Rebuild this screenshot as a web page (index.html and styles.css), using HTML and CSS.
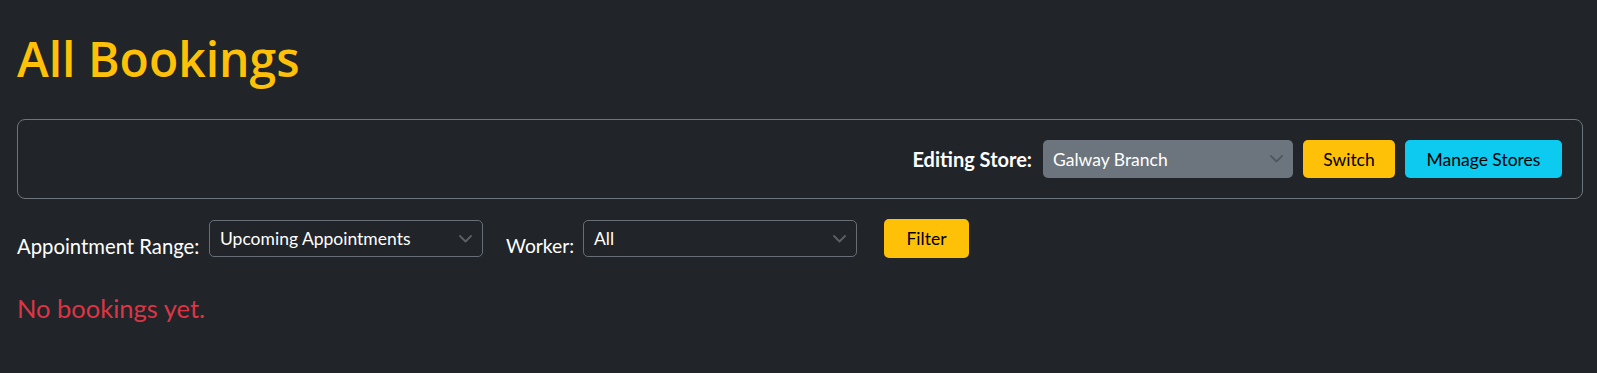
FILE: index.html
```html
<!DOCTYPE html>
<html>
<head>
<meta charset="utf-8">
<link rel="stylesheet" href="styles.css">
</head>
<body>
<div class="page">
  <h1 class="title">All Bookings</h1>
  <div class="store-box">
    <span class="store-label">Editing Store:</span>
    <div class="select select-store">
      <span>Galway Branch</span>
      <svg class="chev" width="13" height="8" viewBox="0 0 13 8"><path d="M1 1l5.5 5.5L12 1" fill="none" stroke="#50575e" stroke-width="1.8" stroke-linecap="round" stroke-linejoin="round"/></svg>
    </div>
    <button class="btn btn-switch">Switch</button>
    <button class="btn btn-manage">Manage Stores</button>
  </div>
  <div class="filters">
    <label class="flabel range">Appointment Range:</label>
    <div class="select select-outline">
      <span>Upcoming Appointments</span>
      <svg class="chev" width="13" height="8" viewBox="0 0 13 8"><path d="M1 1l5.5 5.5L12 1" fill="none" stroke="#5a6066" stroke-width="1.8" stroke-linecap="round" stroke-linejoin="round"/></svg>
    </div>
    <label class="flabel worker">Worker:</label>
    <div class="select select-outline">
      <span>All</span>
      <svg class="chev" width="13" height="8" viewBox="0 0 13 8"><path d="M1 1l5.5 5.5L12 1" fill="none" stroke="#5a6066" stroke-width="1.8" stroke-linecap="round" stroke-linejoin="round"/></svg>
    </div>
    <button class="btn btn-filter">Filter</button>
  </div>
  <p class="empty">No bookings yet.</p>
</div>
</body>
</html>
```
FILE: styles.css
```css
html, body {
  margin: 0;
  padding: 0;
  background: #212529;
  color: #f8f9fa;
  font-family: "Lato", "Open Sans", sans-serif;
}
.page {
  padding: 30px 14px 40px 17px;
}
.title {
  margin: 0 0 31px 0;
  height: 58px;
  color: #ffc107;
  font-family: "Open Sans", "Lato", sans-serif;
  font-size: 48px;
  font-weight: 600;
  line-height: 58px;
}
.store-box {
  border: 1px solid #6c757d;
  border-radius: 8px;
  padding: 20px 20px;
  display: flex;
  justify-content: flex-end;
  align-items: center;
  gap: 10px;
}
.store-label {
  color: #fff;
  font-weight: 700;
  font-size: 20px;
  margin-right: 1px;
}
.select {
  box-sizing: border-box;
  border-radius: 5px;
  display: flex;
  align-items: center;
  justify-content: space-between;
  padding: 0 10px 0 10px;
  font-size: 17.5px;
  color: #fff;
}
.select-store {
  width: 250px;
  height: 38px;
  background: #6c757d;
}
.select-outline {
  width: 274px;
  height: 37px;
  border: 1px solid #676e75;
  background: #212529;
  margin-top: 1px;
}
.btn {
  box-sizing: border-box;
  height: 38px;
  border: none;
  border-radius: 5px;
  font-family: inherit;
  font-size: 17.5px;
  color: #000;
  padding: 0;
}
.btn-switch { background: #ffc107; width: 92px; }
.btn-manage { background: #0dcaf0; width: 157px; }
.filters {
  display: flex;
  align-items: flex-start;
  margin-top: 20px;
  height: 39px;
}
.flabel {
  color: #fff;
  font-size: 20px;
  line-height: 24px;
  margin-top: 15px;
  white-space: nowrap;
}
.flabel.range {
  width: 182px;
  margin-right: 10px;
  font-size: 20.3px;
}
.flabel.worker {
  width: 66px;
  margin-left: 23px;
  margin-right: 11px;
  font-size: 19.3px;
}
.btn-filter {
  background: #ffc107;
  width: 85px;
  height: 39px;
  margin-left: 27px;
}
.empty {
  color: #dc3545;
  font-size: 25.5px;
  line-height: 30px;
  margin: 35px 0 0 0;
}
```
